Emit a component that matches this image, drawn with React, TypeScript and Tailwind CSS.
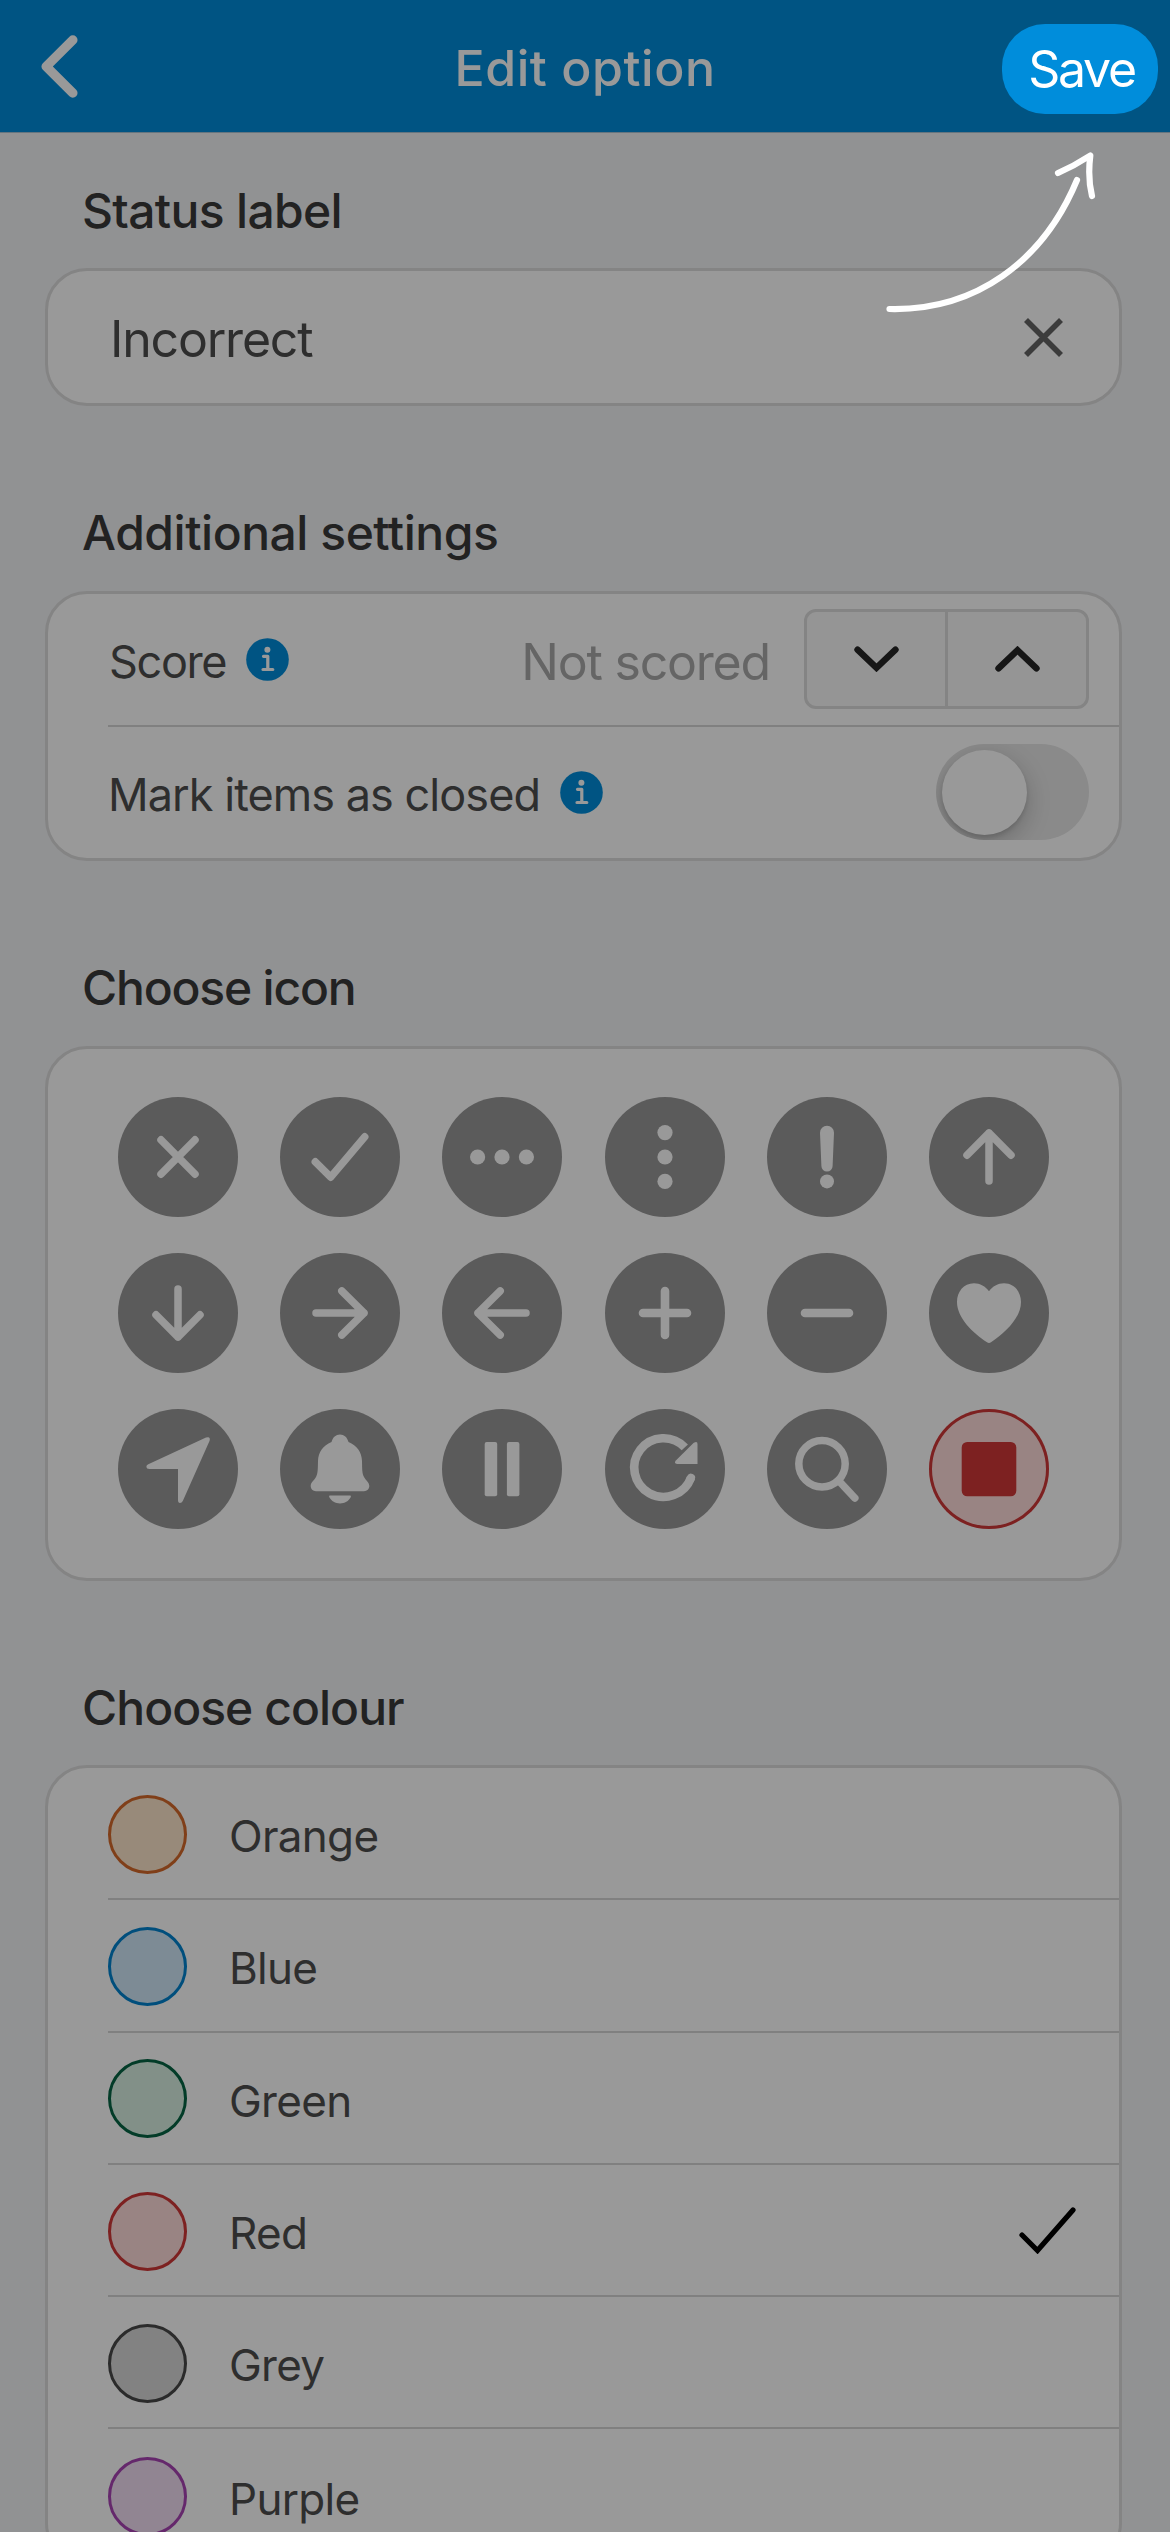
import { ReactNode, useState } from "react";
import clsx from "clsx";

const line = {
  fill: "none",
  stroke: "currentColor",
  strokeWidth: 7.5,
  strokeLinecap: "round",
  strokeLinejoin: "round",
} as const;

const arrowPath = "M60 84V36M38 58.2L60 36L82 58.2";

const icons: { name: string; shape: ReactNode }[] = [
  { name: "cross", shape: <path {...line} d="M43 42.8L77 77.2M77 42.8L43 77.2" /> },
  { name: "check", shape: <path {...line} d="M35.3 64.8L50.7 80.2L84.7 39.8" /> },
  {
    name: "more",
    shape: <g fill="currentColor"><circle cx="35.6" cy="60" r="7.6" /><circle cx="60" cy="60" r="7.6" /><circle cx="84.4" cy="60" r="7.6" /></g>,
  },
  {
    name: "more-vertical",
    shape: <g fill="currentColor"><circle cx="60" cy="35.6" r="7.6" /><circle cx="60" cy="60" r="7.6" /><circle cx="60" cy="84.4" r="7.6" /></g>,
  },
  {
    name: "exclamation",
    shape: (
      <g fill="currentColor">
        <path d="M53 35.7a7 7 0 0 1 14 0L65.6 69a5.6 5.6 0 0 1-11.2 0Z" />
        <circle cx="60" cy="84.4" r="7" />
      </g>
    ),
  },
  { name: "up", shape: <path {...line} d={arrowPath} /> },
  { name: "down", shape: <path {...line} d={arrowPath} transform="rotate(180 60 60)" /> },
  { name: "right", shape: <path {...line} d={arrowPath} transform="rotate(90 60 60)" /> },
  { name: "left", shape: <path {...line} d={arrowPath} transform="rotate(-90 60 60)" /> },
  { name: "plus", shape: <path {...line} strokeWidth="8.6" d="M60 38V82M38 60H82" /> },
  { name: "minus", shape: <path {...line} strokeWidth="8.6" d="M38 60H82" /> },
  {
    name: "heart",
    shape: (
      <path
        fill="currentColor"
        d="M60 38.3C63.5 33.5 69 30.3 75 30.3C85.5 30.3 92 39 92 49C92 65 76 80 62 89.3Q60 90.6 58 89.3C44 80 28 65 28 49C28 39 34.5 30.3 45 30.3C51 30.3 56.5 33.5 60 38.3Z"
      />
    ),
  },
  {
    name: "location",
    shape: (
      <path
        fill="currentColor"
        d="M30.3 55.3L88 28.6Q92.8 27 91.6 31.8L64.8 92Q63.8 94 62 94Q60 94 60 91V60H31.5Q28.4 60 28.4 57.5Q28.4 56.2 30.3 55.3Z"
      />
    ),
  },
  {
    name: "bell",
    shape: (
      <g fill="currentColor">
        <path d="M51.5 33C52.6 28.2 56 25.4 60 25.4S67.4 28.2 68.5 33C77 36.5 81.7 43 82 52C82.2 60 82 64 84 68C86 71.5 89.3 73.5 89.3 77C89.3 80 87 82.2 84 82.2H36C33 82.2 30.7 80 30.7 77C30.7 73.5 34 71.5 36 68C38 64 37.8 60 38 52C38.3 43 43 36.5 51.5 33Z" />
        <path d="M50.2 86.6H69.8Q71.5 86.6 70.8 88C68.5 92.3 64.8 94.4 60 94.4S51.5 92.3 49.2 88Q48.5 86.6 50.2 86.6Z" />
      </g>
    ),
  },
  {
    name: "pause",
    shape: <g fill="currentColor"><rect x="42.7" y="33" width="12.5" height="54.3" rx="2" /><rect x="64.9" y="33" width="12.5" height="54.3" rx="2" /></g>,
  },
  {
    name: "refresh",
    shape: (
      <>
        <path {...line} strokeWidth="8.6" strokeLinecap="butt" d="M79.8 38.4A29.3 29.3 0 1 0 86 68.7" />
        <path {...line} strokeWidth="8.2" d="M85.3 70.3L86 68.7" />
        <path fill="currentColor" d="M88.5 34Q92.5 31.5 92.5 35V55H72Q68.8 54.6 70.6 51.8Z" />
      </>
    ),
  },
  {
    name: "search",
    shape: (
      <g {...line}>
        <circle cx="55" cy="54.8" r="23.2" />
        <path d="M71.5 71.5L87.8 89" />
      </g>
    ),
  },
  { name: "stop", shape: <rect fill="currentColor" x="32.7" y="32.9" width="54.6" height="54.4" rx="5.5" /> },
];

const colours = [
  { name: "Orange", swatch: "bg-[#fde6cb] border-[#d66a2b]" },
  { name: "Blue", swatch: "bg-[#d1e8f8] border-[#0083cf]" },
  { name: "Green", swatch: "bg-[#d9f1e3] border-[#056444]" },
  { name: "Red", swatch: "bg-[#ffdcda] border-[#d03737]" },
  { name: "Grey", swatch: "bg-[#d9d9d9] border-[#484848]" },
  { name: "Purple", swatch: "bg-[#f2def3] border-[#a844b4]" },
];

type SectionProps = { title: string; titleClass: string; className?: string; children: ReactNode };

const Section = ({ title, titleClass, className, children }: SectionProps) => (
  <section className="mb-24">
    <h2 className={clsx("h-[88.5px] pl-[37px] text-[48px] leading-[61px] font-medium text-[#3a3a3a]", titleClass)}>
      {title}
    </h2>
    <div className={clsx("rounded-[42px] border-[3px] border-[#dcdcdc] bg-white", className)}>{children}</div>
  </section>
);

const InfoIcon = () => (
  <svg className="size-[43px] shrink-0" viewBox="0 0 43 43">
    <circle cx="21.5" cy="21.5" r="21.3" fill="#008ddb" />
    <circle cx="21.4" cy="11.8" r="3" fill="#fff" />
    <path d="M17.5 18.3H21.8V31M17 31.5H26.8" fill="none" stroke="#fff" strokeWidth="3.2" strokeLinecap="round" strokeLinejoin="round" />
  </svg>
);

const Chevron = ({ up }: { up?: boolean }) => (
  <svg className={clsx("h-[26px] w-[45px]", up && "rotate-180")} viewBox="0 0 45 26">
    <path d="M3.5 3.6L22.5 21.8L41.5 3.6" fill="none" stroke="#262626" strokeWidth="6.4" strokeLinecap="round" />
  </svg>
);

export default function App() {
  const [icon, setIcon] = useState("stop");
  const [colour, setColour] = useState("Red");

  return (
    <div className="relative h-[2532px] w-[1170px] overflow-hidden bg-[#f2f3f6] font-[Inter,sans-serif]">
      <header className="grid h-[133px] grid-cols-[1fr_auto_1fr] items-center border-b border-[#a9c4d4] bg-[#008ddb] text-white">
        <svg className="ml-[41px] h-[63px] w-[37px]" viewBox="0 0 37 63">
          <path {...line} strokeWidth="9.5" d="M31.8 5L5.2 31.5L31.8 58" />
        </svg>
        <h1 className="pt-1 text-[50px] leading-[60px] font-medium tracking-[0.011em]">Edit option</h1>
      </header>

      <main className="pt-[46.5px] pr-12 pl-[45px]">
        <Section
          title="Status label"
          titleClass="tracking-[-0.014em]"
          className="flex h-[138px] items-center justify-between pr-14 pl-[62px]"
        >
          <span className="pt-1 text-[50px] leading-[60px] tracking-[-0.024em] text-[#4e4e4e]">Incorrect</span>
          <svg className="size-[39px]" viewBox="0 0 39 39">
            <path d="M2 2L37 37M37 2L2 37" stroke="#646464" strokeWidth="5.6" />
          </svg>
        </Section>

        <Section title="Additional settings" titleClass="tracking-[-0.01em]" className="h-[270.5px] pl-[60px]">
          <div className="flex h-[133px] items-center border-b-2 border-[#d6d6d6] pr-[30px]">
            <span className="mr-5 ml-px pt-1.5 text-[45px] leading-[60px] tracking-[-0.03em] text-[#4e4e4e]">Score</span>
            <InfoIcon />
            <span className="ml-auto pt-1.5 text-[50px] leading-[60px] tracking-[-0.024em] text-[#a9a9a9]">Not scored</span>
            <div className="ml-[34px] flex h-[100px] w-[285px] divide-x-[3px] divide-[#dcdcdc] rounded-xl border-[3px] border-[#dcdcdc] bg-[#f9f9f9]">
              <button className="flex flex-1 items-center justify-center"><Chevron /></button>
              <button className="flex flex-1 items-center justify-center"><Chevron up /></button>
            </div>
          </div>
          <div className="flex h-[131px] items-center pr-[30px]">
            <span className="mr-5 pt-1.5 text-[45px] leading-[60px] tracking-[-0.021em] text-[#4e4e4e]">Mark items as closed</span>
            <InfoIcon />
            <div className="ml-auto flex h-24 w-[153px] items-center overflow-hidden rounded-full bg-[#e6e6e6] pl-[6px]">
              <div className="size-[85px] rounded-full bg-white shadow-[0_8px_24px_rgba(0,0,0,0.22),0_3px_4px_rgba(0,0,0,0.12)]" />
            </div>
          </div>
        </Section>

        <Section title="Choose icon" titleClass="tracking-[-0.025em]" className="h-[535px] px-[69.5px] pt-12">
          <div className="grid grid-cols-[repeat(6,120px)] gap-x-[42.4px] gap-y-[36.4px]">
            {icons.map(({ name, shape }) => (
              <button
                key={name}
                aria-label={name}
                onClick={() => setIcon(name)}
                className={clsx(
                  "size-[120px] rounded-full",
                  name === icon ? "bg-[#ffdcda] text-[#d03737] ring-[3px] ring-[#d03737] ring-inset" : "bg-[#989898] text-white"
                )}
              >
                <svg className="size-[120px]" viewBox="0 0 120 120">{shape}</svg>
              </button>
            ))}
          </div>
        </Section>

        <Section title="Choose colour" titleClass="tracking-[-0.02em]" className="pl-[60px]">
          {colours.map(({ name, swatch }) => (
            <div
              key={name}
              onClick={() => setColour(name)}
              className="flex h-[132.3px] items-center border-b-2 border-[#d6d6d6] pr-[43px] last:border-b-0"
            >
              <span className={clsx("mt-0.5 size-[79px] rounded-full border-[3px]", swatch)} />
              <span className="ml-[42px] pt-1.5 text-[44px] leading-[60px] tracking-[-0.016em] text-[#4e4e4e]">{name}</span>
              {name === colour && (
                <svg className="ml-auto h-[47px] w-[57px]" viewBox="0 0 57 47">
                  <path d="M3 28L18.5 43.5L54 3" fill="none" stroke="#000" strokeWidth="5.2" strokeLinecap="round" />
                </svg>
              )}
            </div>
          ))}
        </Section>
      </main>

      {/* tour step: dims the page and points at the save button */}
      <div className="absolute inset-0 bg-black/40" />
      <button className="absolute top-6 right-3 h-[90px] w-[156px] rounded-[43px] bg-[#008ddb] pl-[3px] text-[50px] leading-[60px] tracking-[-0.045em] text-white">
        Save
      </button>
      <svg className="absolute top-[140px] left-[870px] h-[190px] w-[240px]" viewBox="870 140 240 190">
        <path
          d="M889.5 309C975 311 1043 262 1077 180M1058 173Q1074 166 1090.3 155.5Q1087.5 178 1092 196"
          fill="none" stroke="#fff" strokeWidth="6.2" strokeLinecap="round" strokeLinejoin="round"
        />
      </svg>
    </div>
  );
}
